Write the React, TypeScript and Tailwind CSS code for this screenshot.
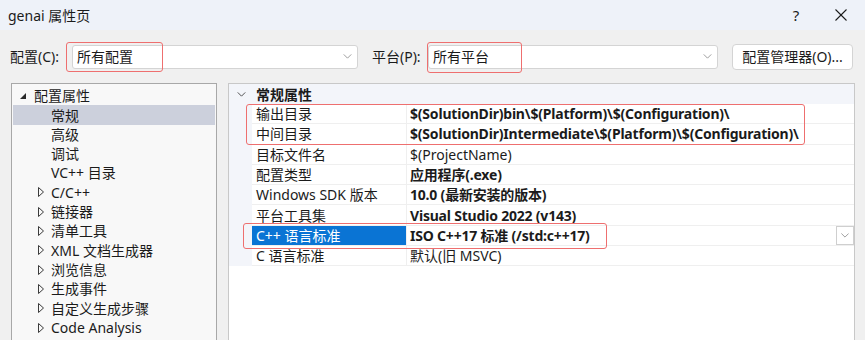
import React from 'react';

const FONT = '"Noto Sans", "Noto Sans CJK SC", sans-serif';

type Prop = { name: string; value: string; bold?: boolean; selected?: boolean };

const props: Prop[] = [
  { name: '输出目录', value: '$(SolutionDir)bin\\$(Platform)\\$(Configuration)\\', bold: true },
  { name: '中间目录', value: '$(SolutionDir)Intermediate\\$(Platform)\\$(Configuration)\\', bold: true },
  { name: '目标文件名', value: '$(ProjectName)' },
  { name: '配置类型', value: '应用程序(.exe)', bold: true },
  { name: 'Windows SDK 版本', value: '10.0 (最新安装的版本)', bold: true },
  { name: '平台工具集', value: 'Visual Studio 2022 (v143)', bold: true },
  { name: 'C++ 语言标准', value: 'ISO C++17 标准 (/std:c++17)', bold: true, selected: true },
  { name: 'C 语言标准', value: '默认(旧 MSVC)' },
];

const tree: { label: string; level: 0 | 1; expander?: 'open' | 'closed'; selected?: boolean }[] = [
  { label: '配置属性', level: 0, expander: 'open' },
  { label: '常规', level: 1, selected: true },
  { label: '高级', level: 1 },
  { label: '调试', level: 1 },
  { label: 'VC++ 目录', level: 1 },
  { label: 'C/C++', level: 1, expander: 'closed' },
  { label: '链接器', level: 1, expander: 'closed' },
  { label: '清单工具', level: 1, expander: 'closed' },
  { label: 'XML 文档生成器', level: 1, expander: 'closed' },
  { label: '浏览信息', level: 1, expander: 'closed' },
  { label: '生成事件', level: 1, expander: 'closed' },
  { label: '自定义生成步骤', level: 1, expander: 'closed' },
  { label: 'Code Analysis', level: 1, expander: 'closed' },
];

const Chevron = ({ className = '' }: { className?: string }) => (
  <svg viewBox="0 0 10 6" className={className} fill="none" stroke="currentColor" strokeWidth="1">
    <polyline points="0.5,0.5 5,5 9.5,0.5" />
  </svg>
);

const Combo = ({ text, width }: { text: string; width: string }) => (
  <div className={`${width} h-[24px] bg-white border border-[#d4d4d4] rounded-[3px] flex items-center pl-[4px] pr-[5px]`}>
    <span className="flex-1 text-[14px] text-[#1b1b1b]">{text}</span>
    <Chevron className="w-[9px] h-[5px] text-[#8a8a8a]" />
  </div>
);

export default function App() {
  return (
    <div className="w-[865px] h-[340px] bg-[#f0f0f0] overflow-hidden relative text-[#1b1b1b]" style={{ fontFamily: FONT }}>
      {/* title bar */}
      <div className="h-[30px] bg-[#eef2f9] flex items-center pl-[8px]">
        <span className="flex-1 text-[14px]">genai 属性页</span>
        <span className="text-[15px] w-[20px] text-center mr-[29px]">?</span>
        <svg viewBox="0 0 12 12" className="w-[12px] h-[12px] mr-[18px]" stroke="#1b1b1b" strokeWidth="1.1">
          <line x1="0.5" y1="0.5" x2="11.5" y2="11.5" />
          <line x1="11.5" y1="0.5" x2="0.5" y2="11.5" />
        </svg>
      </div>

      {/* configuration row */}
      <div className="h-[53px] flex items-center pl-[10px]">
        <span className="w-[62px] text-[14px]">配置(C):</span>
        <Combo text="所有配置" width="w-[286px]" />
        <span className="ml-[14px] w-[56px] text-[14px]">平台(P):</span>
        <Combo text="所有平台" width="w-[290px]" />
        <button className="ml-[14px] w-[121px] h-[26px] bg-white border border-[#d4d4d4] rounded-[4px] text-[14px] text-[#1b1b1b]">
          配置管理器(O)...
        </button>
      </div>

      {/* panels */}
      <div className="flex pl-[11px] gap-[11px] h-[260px]">
        <div className="w-[206px] h-full bg-[#f8f8f8] border border-[#a8a8a8] pt-[2px] px-[1px]">
          {tree.map((t) => (
            <div
              key={t.label}
              className={`h-[19.33px] flex items-center text-[14px] ${t.selected ? 'bg-[#ccd0dc]' : ''}`}
            >
              <div className={`${t.level === 0 ? 'w-[21px] pl-[7px]' : 'w-[38px] pl-[25px]'} flex items-center`}>
                {t.expander === 'open' && (
                  <svg viewBox="0 0 6 6" className="w-[6px] h-[6px]">
                    <polygon points="6,0 6,6 0,6" fill="#2a2a2a" />
                  </svg>
                )}
                {t.expander === 'closed' && (
                  <svg viewBox="0 0 6 10" className="w-[6px] h-[10px]">
                    <polygon points="0.5,0.5 5.5,5 0.5,9.5" fill="none" stroke="#3a3a3a" strokeWidth="1" />
                  </svg>
                )}
              </div>
              <span>{t.label}</span>
            </div>
          ))}
        </div>

        <div className="w-[627px] h-full bg-white border border-[#c8c8c8] flex flex-col">
          <div className="h-[20px] bg-[#f3f5fa] flex items-center">
            <div className="w-[23px] flex justify-center pl-[2px]">
              <Chevron className="w-[9px] h-[5px] text-[#333]" />
            </div>
            <span className="pl-[4px] text-[14px] font-bold">常规属性</span>
          </div>
          <div className="flex">
            <div className="w-[23px] bg-[#f3f5fa]" />
            <div className="flex-1">
              {props.map((p) => (
                <div key={p.name} className="h-[20.3px] flex border-b border-[#efefef] text-[14px]">
                  <div
                    className={`w-[155px] pl-[4px] flex items-center border-r border-[#efefef] ${
                      p.selected ? 'bg-[#0a74d4] text-white' : ''
                    }`}
                  >
                    {p.name}
                  </div>
                  <div className={`flex-1 pl-[3px] flex items-center ${p.bold ? 'font-bold tracking-[-0.2px]' : ''}`}>
                    <span className="flex-1 whitespace-nowrap">{p.value}</span>
                    {p.selected && (
                      <div className="w-[18px] h-[19px] border border-[#cfcfcf] bg-white flex items-center justify-center">
                        <Chevron className="w-[8px] h-[5px] text-[#888]" />
                      </div>
                    )}
                  </div>
                </div>
              ))}
            </div>
          </div>
        </div>
      </div>

      {/* annotation boxes */}
      <div className="absolute left-[66px] top-[42px] w-[97px] h-[30px] border-[1.5px] border-[#ee6f6f] rounded-[3px]" />
      <div className="absolute left-[427px] top-[42px] w-[95px] h-[31px] border-[1.5px] border-[#ee6f6f] rounded-[3px]" />
      <div className="absolute left-[246px] top-[104px] w-[559px] h-[41px] border-[1.5px] border-[#ee6f6f] rounded-[3px]" />
      <div className="absolute left-[243px] top-[223px] w-[364px] h-[26px] border-[1.5px] border-[#ee6f6f] rounded-[3px]" />
    </div>
  );
}
